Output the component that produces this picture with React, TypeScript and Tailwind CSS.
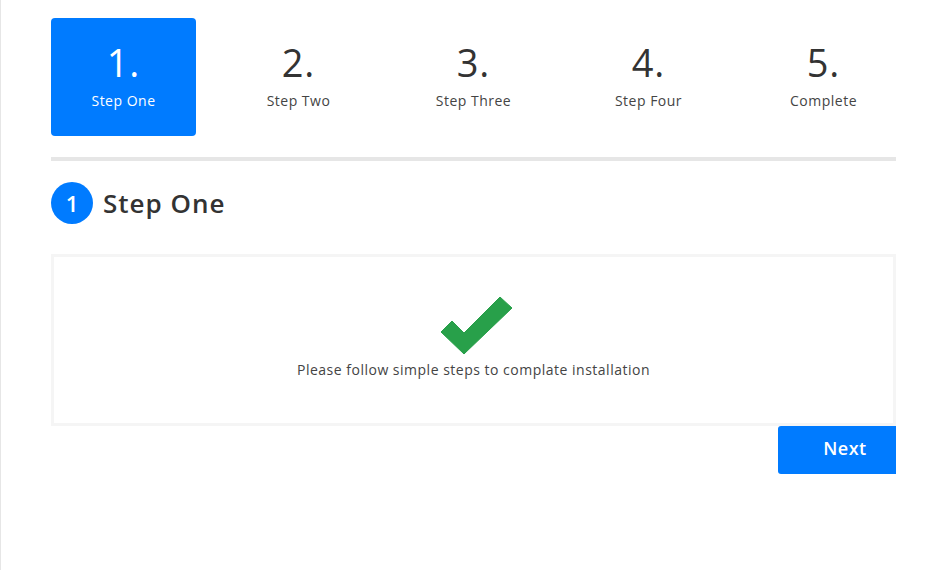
import React from "react";

const steps = [
  { n: "1.", label: "Step One" },
  { n: "2.", label: "Step Two" },
  { n: "3.", label: "Step Three" },
  { n: "4.", label: "Step Four" },
  { n: "5.", label: "Complete" },
];

export default function App() {
  return (
    <div
      className="w-[940px] h-[570px] bg-white border-l border-[#e6e6e6] overflow-hidden"
      style={{ fontFamily: '"Open Sans", "DejaVu Sans", sans-serif' }}
    >
      <div className="w-[845px] ml-[50px] pt-[18px]">
        <div className="grid grid-cols-5 gap-[30px]">
          {steps.map((s, i) => (
            <div
              key={s.n}
              className={
                "h-[118px] rounded-[4px] flex flex-col items-center pt-[20px] " +
                (i === 0 ? "bg-[#007bff] text-white" : "text-[#333]")
              }
            >
              <div className="text-[38px] leading-[48px] tracking-[1px]">{s.n}</div>
              <div
                className={
                  "text-[14px] leading-[20px] mt-[5px] tracking-[0.5px] " +
                  (i === 0 ? "text-white" : "text-[#444]")
                }
              >
                {s.label}
              </div>
            </div>
          ))}
        </div>
        <div className="h-[4px] bg-[#e6e6e6] mt-[21px]" />
        <div className="flex items-center mt-[21px] h-[42px]">
          <div className="w-[42px] h-[42px] rounded-full bg-[#007bff] text-white flex items-center justify-center text-[22px] font-semibold">
            1
          </div>
          <div className="ml-[10px] text-[26px] font-semibold text-[#333] tracking-[1px]">
            Step One
          </div>
        </div>
        <div className="mt-[30px] h-[172px] border-[3px] border-[#f5f5f5] flex flex-col items-center pt-[40px]">
          <svg width="72" height="58" viewBox="0 0 72 58" className="ml-[6px]">
            <polygon
              points="0,35 11,24 23,36 59,0 71,11 23,57"
              fill="#28a04a"
              stroke="#28a04a"
              strokeWidth="1"
              strokeLinejoin="round"
            />
          </svg>
          <div className="text-[14px] text-[#444] mt-[4px] tracking-[0.5px]">
            Please follow simple steps to complate installation
          </div>
        </div>
        <div className="flex justify-end">
          <button className="w-[118px] h-[48px] pb-[3px] pl-[16px] bg-[#007bff] text-white text-[18px] font-semibold rounded-l-[3px] tracking-[0.5px]">
            Next
          </button>
        </div>
      </div>
    </div>
  );
}
